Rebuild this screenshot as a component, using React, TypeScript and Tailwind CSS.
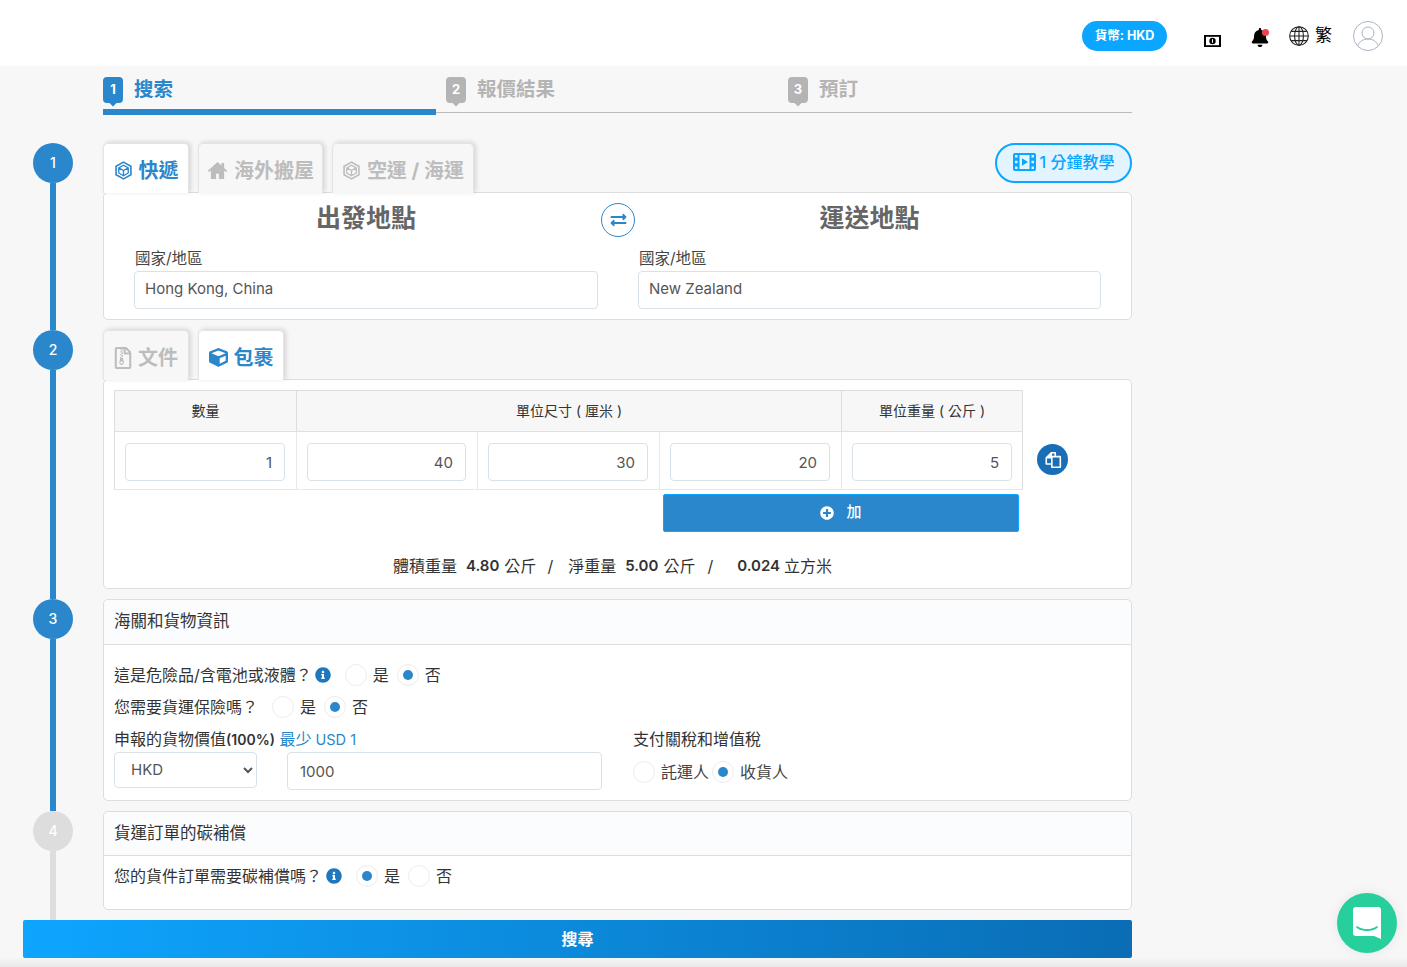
import React from "react";
import { FaCube, FaInfoCircle, FaPlusCircle, FaBell, FaRegFileArchive, FaExchangeAlt } from "react-icons/fa";

const FONT = "font-['Inter','Noto_Sans_CJK_TC',sans-serif]";

function Badge({ n, active }: { n: number; active?: boolean }) {
  return (
    <span className="relative flex h-[30px] w-[20px] items-start justify-center">
      <svg viewBox="0 0 20 30" className={`absolute inset-0 h-[30px] w-[20px] ${active ? "fill-[#2a87cb]" : "fill-[#b4b4b4]"}`}>
        <path d="M4 0h12a4 4 0 0 1 4 4v18a4 4 0 0 1-4 4h-2.500l-3.500 3.500-3.500-3.500H4a4 4 0 0 1-4-4V4a4 4 0 0 1 4-4z" />
      </svg>
      <span className="relative mt-[3px] text-[13px] leading-[18px] font-bold text-white">{n}</span>
    </span>
  );
}

function HexBox({ className }: { className: string }) {
  return (
    <svg viewBox="0 0 20 20" className={className} fill="none" stroke="currentColor">
      <path d="M10 1.200 17.800 5.600v8.800L10 18.800 2.200 14.400V5.600z" strokeWidth="1.700" />
      <path d="M5 7.200 10 10l5-2.800M10 10v5.800M5 7.200V12.600l5 3 5-3V7.200L10 4.400z" strokeWidth="1.400" />
    </svg>
  );
}

function Home({ className }: { className: string }) {
  return (
    <svg viewBox="0 0 22 20" className={className} fill="currentColor">
      <path d="M11 1 .6 10.400l1.300 1.300L4 9.900V19h5.500v-5.500h3V19H18V9.900l2.100 1.800 1.300-1.300L18 7.300V2h-2.800v2.700z" />
    </svg>
  );
}

function Tab({ active, width, icon, label }: { active?: boolean; width: string; icon: React.ReactNode; label: string }) {
  return (
    <div
      className={`${width} relative z-10 flex h-[50px] items-center justify-center gap-[6px] rounded-t-[5px] border border-b-0 border-[#e4e4e4] pt-[4px] shadow-[2px_-1px_5px_rgba(0,0,0,0.14)] text-[20px] font-bold ${
        active ? "bg-white text-[#2a87cb]" : "bg-[#f7f7f7] text-[#bdbdbd]"
      }`}
    >
      {icon}
      <span>{label}</span>
    </div>
  );
}

function Radio({ on, label }: { on?: boolean; label: string }) {
  return (
    <span className="flex items-center gap-[6px]">
      <span className="flex h-[22px] w-[22px] items-center justify-center rounded-full border border-[#ececec] bg-white">
        {on && <span className="h-[10px] w-[10px] rounded-full bg-[#2a87cb]" />}
      </span>
      <span>{label}</span>
    </span>
  );
}

function Step({ n, grey, children }: { n: number; grey?: boolean; children: React.ReactNode }) {
  const c = grey ? "bg-[#dddddd]" : "bg-[#2a87cb]";
  return (
    <div className="flex">
      <div className="flex w-[103px] shrink-0 flex-col pl-[33px]">
        <div className={`flex h-[40px] w-[40px] items-center justify-center rounded-full pb-[1px] text-[14px] font-medium text-white ${c}`}>{n}</div>
        <div className={`ml-[17px] w-[6px] flex-1 ${c}`} />
      </div>
      <div className="w-[1029px] pb-[10px]">{children}</div>
    </div>
  );
}

const panel = "rounded-[5px] border border-[#dddddd] bg-white";
const inputCls = "rounded-[4px] border border-[#d8e2e8] bg-white px-[10px] text-[15px] text-[#555] outline-none";

function NumCell({ value, width, last }: { value: string; width: string; last?: boolean }) {
  return (
    <div className={`${width} flex h-[58px] items-start border-b border-[#e6e8ea] pl-[10px] pt-[11px] ${last ? "pr-[10px]" : "border-r pr-[11px]"}`}>
      <input defaultValue={value} className={`${inputCls} h-[38px] w-full pr-[12px] text-right`} />
    </div>
  );
}

function Head({ label, width, last }: { label: string; width: string; last?: boolean }) {
  return (
    <div className={`${width} flex h-[41px] items-center justify-center border-b border-[#d8e2e8] bg-[#f7f7f7] pb-[2px] text-[14px] text-[#333] ${last ? "" : "border-r border-r-[#dddddd]"}`}>
      {label}
    </div>
  );
}

function CardHead({ label, tall }: { label: string; tall?: boolean }) {
  return (
    <div className={`flex ${tall ? "h-[45px]" : "h-[44px]"} items-center rounded-t-[5px] border-b border-[#dddddd] bg-[#fbfcfe] px-[10px] pb-[1px] text-[16.500px] text-[#333]`}>
      {label}
    </div>
  );
}

function Info() {
  return <FaInfoCircle className="h-[16px] w-[16px] text-[#1f78bd]" />;
}

export default function App() {
  return (
    <div className={`${FONT} relative h-[967px] overflow-hidden bg-[#f7f7f7] text-[16px] text-[#333]`}>
      <header className="flex h-[66px] items-start bg-white">
        <div className="ml-[1082px] mt-[21px] flex h-[30px] w-[85px] items-center justify-center rounded-full bg-[#0aa6ff] text-[12.500px] font-bold text-white">
          貨幣: HKD
        </div>
        <svg viewBox="0 0 17 12" className="ml-[37px] mt-[35px] h-[12px] w-[17px]">
          <rect width="17" height="12" fill="#000" />
          <rect x="2" y="1.800" width="13" height="8.400" fill="#fff" />
          <circle cx="8.500" cy="6" r="3.200" fill="#000" />
          <rect x="8" y="4.200" width="1" height="3.600" fill="#fff" />
        </svg>
        <span className="relative ml-[30px] mt-[28px]">
          <FaBell className="h-[19px] w-[18px] text-black" />
          <span className="absolute right-[0px] top-[1px] h-[7px] w-[7px] rounded-full bg-[#f0414c]" />
        </span>
        <svg viewBox="0 0 20 20" className="ml-[20px] mt-[26px] h-[20px] w-[20px]" fill="none" stroke="#222" strokeWidth="1.100">
          <circle cx="10" cy="10" r="9.300" />
          <ellipse cx="10" cy="10" rx="4.400" ry="9.300" />
          <path d="M10 .7v18.600M.7 10h18.600M2.200 5.400h15.600M2.200 14.600h15.600" />
        </svg>
        <span className="ml-[6px] mt-[23px] text-[17px] leading-[24px] text-black">繁</span>
        <svg viewBox="0 0 30 30" className="ml-[21px] mt-[21px] h-[30px] w-[30px]" fill="none" stroke="#aab4bf" strokeWidth="1">
          <circle cx="15" cy="15" r="14.500" />
          <circle cx="15" cy="12" r="6" />
          <path d="M4.500 25c2-5 6-7 10.500-7s8.500 2 10.500 7" />
        </svg>
      </header>

      <nav className="ml-[103px] flex h-[47px] w-[1029px] border-b border-[#bbbbbb]">
        <div className="relative flex h-[46px] w-[343px] items-start gap-[11px] pt-[11px]">
          <Badge n={1} active />
          <span className="text-[19.500px] leading-[24px] font-bold text-[#2a87cb]">搜索</span>
          <span className="absolute bottom-[-3px] left-0 h-[6px] w-[333px] bg-[#2a87cb]" />
        </div>
        <div className="flex h-[46px] w-[342px] items-start gap-[11px] pt-[11px]">
          <Badge n={2} />
          <span className="text-[19.500px] leading-[24px] font-bold text-[#b4b4b4]">報價結果</span>
        </div>
        <div className="flex h-[46px] items-start gap-[11px] pt-[11px]">
          <Badge n={3} />
          <span className="text-[19.500px] leading-[24px] font-bold text-[#b4b4b4]">預訂</span>
        </div>
      </nav>

      <main className="mt-[30px]">
        <Step n={1}>
          <div className="flex items-end">
            <div className="flex items-end gap-[9px]">
              <Tab active width="w-[86px]" label="快遞" icon={<HexBox className="h-[19px] w-[19px]" />} />
              <Tab width="w-[125px]" label="海外搬屋" icon={<Home className="h-[19px] w-[21px]" />} />
              <Tab width="w-[142px]" label="空運 / 海運" icon={<HexBox className="h-[19px] w-[19px]" />} />
            </div>
            <div className="mb-[10px] ml-auto flex h-[40px] w-[137px] items-center justify-center gap-[4px] rounded-full border-2 border-[#0aa6ff] bg-[#e2f4ff] pb-[2px] text-[16px] font-medium text-[#0aa6ff]">
              <svg viewBox="0 0 23 18" className="h-[18px] w-[23px]">
                <path
                  fillRule="evenodd"
                  fill="currentColor"
                  d="M2 0h19a2 2 0 0 1 2 2v14a2 2 0 0 1-2 2H2a2 2 0 0 1-2-2V2a2 2 0 0 1 2-2zM2 2v2.500h2.500V2zM2 7.700v2.600h2.500V7.700zM2 13.500V16h2.500v-2.500zM18.500 2v2.500H21V2zM18.500 7.700v2.600H21V7.700zM18.500 13.500V16H21v-2.500zM6.500 2v14h10V2z"
                />
                <path d="M9 5.200v7.600l6-3.800z" fill="currentColor" />
              </svg>
              <span>1 分鐘教學</span>
            </div>
          </div>
          <section className={`${panel} -mt-px h-[128px] px-[30px]`}>
            <div className="grid grid-cols-[464px_463px] gap-x-[40px]">
              <div>
                <div className="flex h-[52px] items-center justify-center text-[25px] font-bold text-[#666]">出發地點</div>
                <div className="h-[26px] pl-px pt-[3px] text-[15.500px] leading-[22px] text-[#444]">國家/地區</div>
                <input defaultValue="Hong Kong, China" className={`${inputCls} h-[38px] w-full pb-[4px]`} />
              </div>
              <div className="relative">
                <div className="flex h-[52px] items-center justify-center text-[25px] font-bold text-[#666]">運送地點</div>
                <div className="h-[26px] pl-px pt-[3px] text-[15.500px] leading-[22px] text-[#444]">國家/地區</div>
                <input defaultValue="New Zealand" className={`${inputCls} h-[38px] w-full pb-[4px]`} />
                <span className="absolute left-[-37px] top-[10px] flex h-[34px] w-[34px] items-center justify-center rounded-full border border-[#2a87cb] bg-white">
                  <FaExchangeAlt className="h-[16px] w-[17px] text-[#2a87cb]" />
                </span>
              </div>
            </div>
          </section>
        </Step>

        <Step n={2}>
          <div className="flex items-end gap-[9px]">
            <Tab width="w-[86px]" label="文件" icon={<FaRegFileArchive className="h-[22px] w-[18px]" />} />
            <Tab active width="w-[86px]" label="包裹" icon={<FaCube className="h-[19px] w-[19px]" />} />
          </div>
          <section className={`${panel} -mt-px h-[210px] px-[10px] pt-[10px]`}>
            <div className="flex items-start">
              <div className="w-[909px] border-l border-r border-t border-[#dddddd]">
                <div className="flex">
                  <Head label="數量" width="w-[182px]" />
                  <Head label="單位尺寸 ( 厘米 )" width="w-[545px]" />
                  <Head label="單位重量 ( 公斤 )" width="w-[180px]" last />
                </div>
                <div className="flex">
                  <NumCell value="1" width="w-[182px]" />
                  <NumCell value="40" width="w-[181px]" />
                  <NumCell value="30" width="w-[182px]" />
                  <NumCell value="20" width="w-[182px]" />
                  <NumCell value="5" width="w-[180px]" last />
                </div>
              </div>
              <span className="ml-[14px] mt-[54px] flex h-[31px] w-[31px] items-center justify-center rounded-full bg-[#1a6eb5]">
                <svg viewBox="0 0 16 16" className="h-[18px] w-[18px]" fill="none" stroke="white" strokeWidth="1.400" strokeLinejoin="round">
                  <path d="M10 5V1.500H6.500L2 6v5.500h5" />
                  <path d="M6.500 1.500V6H2" fill="white" />
                  <path d="M7 5h7.500v9.500H7z" />
                </svg>
              </span>
            </div>
            <div className="ml-[549px] mt-[4px] flex h-[38px] w-[356px] items-center justify-center gap-[8px] rounded-[2px] border border-[#0aa6ff] bg-[#2a87cb] pb-[1px] text-[15px] font-medium text-white">
              <FaPlusCircle className="h-[14px] w-[14px]" />
              <span className="ml-[4px]">加</span>
            </div>
            <div className="mt-[23px] flex justify-center pr-[10px] leading-[22px] text-[#333]">
              <span>體積重量</span>
              <b className="ml-[9px] text-[15px] font-semibold">4.80</b>
              <span className="ml-[5px]">公斤</span>
              <span className="ml-[11px]">/</span>
              <span className="ml-[15px]">淨重量</span>
              <b className="ml-[9px] text-[15px] font-semibold">5.00</b>
              <span className="ml-[5px]">公斤</span>
              <span className="ml-[12px]">/</span>
              <b className="ml-[24px] text-[15px] font-semibold">0.024</b>
              <span className="ml-[4px]">立方米</span>
            </div>
          </section>
        </Step>

        <Step n={3}>
          <section className={`${panel} h-[202px]`}>
            <CardHead label="海關和貨物資訊" tall />
            <div className="px-[10px] pt-[19px]">
              <div className="flex h-[22px] items-center">
                <span>這是危險品/含電池或液體？</span>
                <span className="ml-[3px]"><Info /></span>
                <span className="ml-[14px] flex gap-[8px]"><Radio label="是" /><Radio on label="否" /></span>
              </div>
              <div className="mt-[10px] flex h-[22px] items-center">
                <span>您需要貨運保險嗎？</span>
                <span className="ml-[14px] flex gap-[8px]"><Radio label="是" /><Radio on label="否" /></span>
              </div>
              <div className="mt-[10px] flex">
                <div className="w-[519px] shrink-0">
                  <div className="h-[24px] leading-[22px]">
                    申報的貨物價值<b className="text-[14px] font-semibold">(100%)</b> <span className="text-[14.500px] text-[#2a87cb]"><span className="text-[16px]">最少</span> USD 1</span>
                  </div>
                  <div className="flex gap-[30px]">
                    <select defaultValue="HKD" className="h-[36px] w-[143px] shrink-0 rounded-[4px] border border-[#d8e2e8] bg-white pb-[1px] pl-[12px] text-[15px] text-[#555] outline-none">
                      <option>HKD</option>
                    </select>
                    <input defaultValue="1000" className={`${inputCls} h-[38px] w-[315px] shrink-0 pl-[12px]`} />
                  </div>
                </div>
                <div>
                  <div className="h-[24px] leading-[22px]">支付關稅和增值稅</div>
                  <div className="mt-[9px] flex h-[22px] gap-[3px] text-[#444]"><Radio label="託運人" /><Radio on label="收貨人" /></div>
                </div>
              </div>
            </div>
          </section>
        </Step>

        <Step n={4} grey>
          <section className={`${panel} h-[99px]`}>
            <CardHead label="貨運訂單的碳補償" />
            <div className="flex items-center px-[10px] pt-[8px]">
              <span>您的貨件訂單需要碳補償嗎？</span>
              <span className="ml-[4px]"><Info /></span>
              <span className="ml-[14px] flex gap-[8px]"><Radio on label="是" /><Radio label="否" /></span>
            </div>
          </section>
        </Step>
      </main>

      <div className="absolute bottom-0 left-0 h-[10px] w-full bg-gradient-to-b from-[#f7f7f7] to-[#e9e9e9]" />
      <button className="absolute bottom-[9px] left-[23px] h-[38px] w-[1109px] rounded-[2px] bg-[linear-gradient(92deg,#0ea5ff,#0a6db5)] pb-[1px] text-[16px] font-semibold text-white">
        搜尋
      </button>

      <div className="absolute bottom-[14px] right-[10px] flex h-[60px] w-[60px] items-center justify-center rounded-full bg-[#26cf9c] shadow-[0_0_12px_rgba(0,0,0,0.08)]">
        <svg viewBox="0 0 28 32" className="h-[32px] w-[28px]">
          <path d="M3 0h22a3 3 0 0 1 3 3v29l-7-3H3a3 3 0 0 1-3-3V3a3 3 0 0 1 3-3z" fill="white" />
          <path d="M4 20c5 4 15 4 20 0" fill="none" stroke="#26cf9c" strokeWidth="1.800" strokeLinecap="round" />
        </svg>
      </div>
    </div>
  );
}
